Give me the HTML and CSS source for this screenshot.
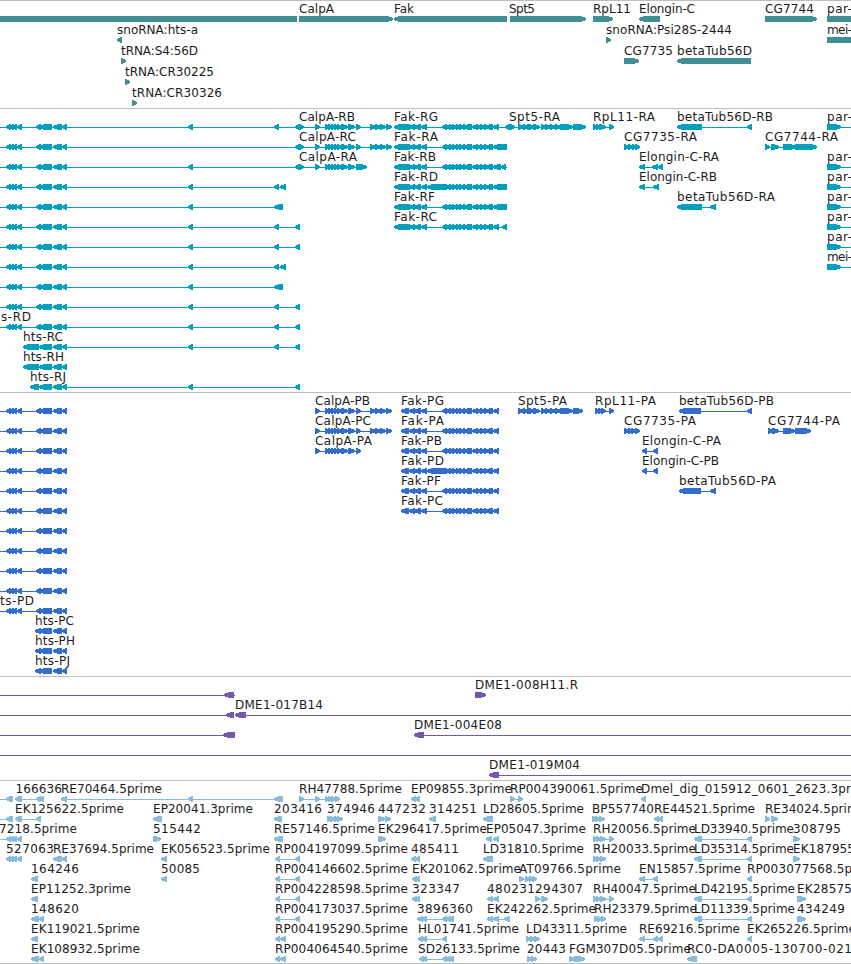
FILE: index.html
```html
<!DOCTYPE html>
<html lang="en">
<head>
    <meta charset="UTF-8">
    <meta name="viewport" content="width=device-width, initial-scale=1.0">
    <title>Genome Browser</title>
    <link rel="stylesheet" href="styles.css">
</head>
<body>
    <div class="browser">
        <div class="track genes" id="genes"></div>
        <div class="track transcripts" id="transcripts"></div>
        <div class="track proteins" id="proteins"></div>
        <div class="track clones" id="clones"></div>
        <div class="track ests" id="ests"></div>
    </div>

    <script src="tracks.js"></script>
</body>
</html>
```

FILE: styles.css
```css
body {
    margin: 0;
    background-color: #fff;
    overflow: hidden;
}

.browser {
    width: 851px;
    display: flex;
    flex-direction: column;
}

.track {
    box-sizing: border-box;
    border-top: 1px solid #bebebe;
    overflow: hidden;
}

.track svg {
    display: block;
}

.track text {
    font-family: "DejaVu Sans", sans-serif;
    font-size: 12px;
    fill: #1c1c1c;
}

.feature {
    fill: currentColor;
    shape-rendering: crispEdges;
}

.genes {
    height: 108px;
    color: #3e8e94;
}

.transcripts {
    height: 284px;
    color: #009fbf;
}

.proteins {
    height: 284px;
    color: #326ccc;
}

.clones {
    height: 104px;
    color: #7558a8;
}

.ests {
    height: 184px;
    color: #87bbdd;
    border-bottom: 1px solid #bebebe;
}
```

FILE: tracks.js
```javascript
// Features: "<a-b" exon on the minus strand, ">a-b" plus strand,
// "#a-b" plain block, "_a-b" intron line.
// Labels: [start, text, end]

const tail4 = ' <6-11 <10-14 <13-17 <17-22';
const htsEnd = ' <39-52 <53-62 <62-67';
const hts = tail4 + ' <36-41' + htsEnd;
const calp = ' >315-320 >325-330 >328-333 >331-336 >334-339 >337-342 >341-348 >348-355';
const calpEnd = ' >356-361 >370-376 >375-381 >380-386 >386-392';
const fakMid = ' <409-415 <414-421 <421-427 <442-447 <446-451 <449-454 <453-458 <456-461 <459-465 <463-472 <472-478 <477-482 <480-486 <485-493';
const spt = ' >518-524 >523-529 >527-535 >533-540 >541-547 >545-551 >550-556 >555-561 >560-571';
const par = ' _827-851 >827-841';
const rh = ' >593-598 >596-601 >600-606';
const ld = ' _694-752 <694-702 <747-752';
const rp = ' _275-300 <275-280 <295-300';

const genes = [
    { f: '#0-297 >299-393 <394-507 >510-586 >593-613 <639-660 >765-817 #827-851',
      l: [[299, 'CalpA', 334], [394, 'Fak', 414], [509, 'Spt5', 535], [593, 'RpL11', 631], [639, 'Elongin-C', 695], [765, 'CG7744', 814], [827, 'par-', 852]] },
    { f: '<117-122 >606-611 #827-851',
      l: [[117, 'snoRNA:hts-a', 198], [606, 'snoRNA:Psi28S-2444', 732], [827, 'mei-', 852]] },
    { f: '>121-126 >624-639 <677-751',
      l: [[121, 'tRNA:S4:56D', 198], [624, 'CG7735', 673], [677, 'betaTub56D', 752]] },
    { f: '>125-130', l: [[125, 'tRNA:CR30225', 214]] },
    { f: '>132-137', l: [[132, 'tRNA:CR30326', 222]] }
];

const transcripts = [
    { f: '_0-300' + hts + ' <188-193 <274-279 <295-300 _299-392 >299-304' + calp + calpEnd + ' _394-510 <394-410' + fakMid + ' <493-499 <505-510 _510-586 >510-515' + spt + ' >567-573 >573-586 _593-614 >593-598 >596-601 >599-606 >609-614 _677-752 <677-702 <747-752' + par,
      l: [[299, 'CalpA-RB', 355], [394, 'Fak-RG', 438], [509, 'Spt5-RA', 560], [593, 'RpL11-RA', 655], [677, 'betaTub56D-RB', 773], [827, 'par-', 852]] },
    { f: '_0-300' + hts + ' <295-300 _299-392 >299-304' + calp + calpEnd + ' _394-507 <394-410' + fakMid + ' <493-507 >624-629 >628-633 >632-637 >635-640 _765-817 >765-770 >771-779 >783-796 >795-817',
      l: [[299, 'CalpA-RC', 356], [394, 'Fak-RA', 438], [624, 'CG7735-RA', 697], [765, 'CG7744-RA', 838]] },
    { f: '_0-300' + hts + ' <188-193 <295-300 _299-367 >299-304' + calp + ' >356-367 _394-507 <394-410' + fakMid + ' <493-501 <501-506 _639-663 <639-645 <652-658 <658-663' + par,
      l: [[299, 'CalpA-RA', 357], [394, 'Fak-RB', 436], [639, 'Elongin-C-RA', 719], [827, 'par-', 852]] },
    { f: '_0-286' + hts + ' <188-193 <274-279 <280-286 _394-507 <394-410' + fakMid + ' <427-445 <493-507 _639-659 <639-645 <653-659' + par,
      l: [[394, 'Fak-RD', 438], [639, 'Elongin-C-RB', 717], [827, 'par-', 852]] },
    { f: '_0-283' + hts + ' <188-193 <274-283 _394-507 <394-410' + fakMid + ' <493-507 _677-716 <677-702 <710-716' + par,
      l: [[394, 'Fak-RF', 435], [677, 'betaTub56D-RA', 775], [827, 'par-', 852]] },
    { f: '_0-300' + hts + ' <188-193 <274-279 <295-300 _394-507 <394-410' + fakMid + ' <493-499 <502-507' + par,
      l: [[394, 'Fak-RC', 437], [827, 'par-', 852]] },
    { f: '_0-300' + hts + ' <188-193 <274-279 <295-300' + par, l: [[827, 'par-', 852]] },
    { f: '_0-286' + hts + ' <188-193 <274-279 <280-286' + par, l: [[827, 'mei-', 852]] },
    { f: '_0-283' + hts + ' <188-193 <274-283', l: [] },
    { f: '_0-300' + hts + ' <188-193 <274-279 <295-300', l: [] },
    { f: '_0-300' + hts + ' <188-193 <274-279 <295-300', l: [[1, 's-RD', 31]] },
    { f: '_23-300 <23-39' + htsEnd + ' <188-193 <274-279 <295-300', l: [[23, 'hts-RC', 63]] },
    { f: '_23-67 <23-39' + htsEnd, l: [[23, 'hts-RH', 64]] },
    { f: '_30-300 <30-39' + htsEnd + ' <188-193 <295-300', l: [[30, 'hts-RJ', 66]] }
];

const fakP = ' _401-499 <401-409' + fakMid + ' <493-499';
const proteins = [
    { f: '_0-67' + hts + ' _315-391' + calp + calpEnd + fakP + ' _518-583' + spt + ' >567-573 >573-583 _595-614 >595-600 >598-602 >601-606 >609-614 _679-752 <679-701 <747-752',
      l: [[315, 'CalpA-PB', 370], [401, 'Fak-PG', 444], [518, 'Spt5-PA', 567], [595, 'RpL11-PA', 656], [679, 'betaTub56D-PB', 774]] },
    { f: '_0-67' + hts + ' _315-391' + calp + calpEnd + fakP + ' >624-629 >628-632 >631-636 >635-640 _768-811 >768-773 >772-779 >783-795 >795-811',
      l: [[315, 'CalpA-PC', 371], [401, 'Fak-PA', 444], [624, 'CG7735-PA', 696], [768, 'CG7744-PA', 840]] },
    { f: '_0-67' + hts + ' _315-361' + calp + ' >356-361' + fakP + ' _642-658 <642-647 <653-658',
      l: [[315, 'CalpA-PA', 372], [401, 'Fak-PB', 442], [642, 'Elongin-C-PA', 721]] },
    { f: '_0-67' + hts + fakP + ' <427-445 _642-658 <642-647 <653-658',
      l: [[401, 'Fak-PD', 444], [642, 'Elongin-C-PB', 719]] },
    { f: '_0-67' + hts + fakP + ' _679-716 <679-701 <710-716',
      l: [[401, 'Fak-PF', 441], [679, 'betaTub56D-PA', 776]] },
    { f: '_0-67' + hts + fakP, l: [[401, 'Fak-PC', 443]] },
    { f: '_0-67' + hts, l: [] },
    { f: '_0-67' + hts, l: [] },
    { f: '_0-67' + hts, l: [] },
    { f: '_0-67' + hts, l: [] },
    { f: '_0-67' + hts, l: [[0, 'ts-PD', 34]] },
    { f: '<35-41' + htsEnd, l: [[35, 'hts-PC', 74]] },
    { f: '<35-41' + htsEnd, l: [[35, 'hts-PH', 75]] },
    { f: '<35-41' + htsEnd, l: [[35, 'hts-PJ', 70]] }
];

const clones = [
    { f: '_0-235 <224-234 >475-486', l: [[475, 'DME1-008H11.R', 578]] },
    { f: '_0-234 <226-234 _236-851 <235-246', l: [[235, 'DME1-017B14', 323]] },
    { f: '_0-235 <223-235 _414-851 <414-424', l: [[414, 'DME1-004E08', 502]] },
    { f: '_0-851', l: [] },
    { f: '_489-851 <489-499', l: [[489, 'DME1-019M04', 580]] }
];

const ests = [
    { f: '_0-13 <6-11 <8-13 _15-44 <15-20 <17-22 <36-41 <39-44 _61-283 <61-67 <188-193 <274-283 _299-340 >299-304 >315-320 >325-330 >328-333 >331-336 >335-340 <411-416 <414-420 _510-523 >510-515 >518-523 <641-646',
      l: [[15.5, '166636', 62], [61, 'RE70464.5prime', 162], [299, 'RH47788.5prime', 402], [411, 'EP09855.3prime', 512], [510, 'RP004390061.5prime', 643], [641, 'Dmel_dig_015912_0601_2623.3pr', 851]] },
    { f: '_0-13 <6-11 <8-13 _15-41 <15-20 <17-22 <36-41 <153-162 <274-282 >327-332 >330-335 >334-339 >337-343 >378-385 >385-391 <429-436 <483-493 >592-597 >595-600 >599-605 <654-659 <658-663 >765-770 >771-778',
      l: [[15, 'EK125622.5prime', 124], [153, 'EP20041.3prime', 253], [274, '203416', 322], [327, '374946', 375], [378, '447232', 426], [429, '314251', 477], [483, 'LD28605.5prime', 584], [592, 'BP557740', 654], [654, 'RE44521.5prime', 755], [765, 'RE34024.5prime', 866]] },
    { f: '_0-22' + tail4 + ' >153-161 <274-283 >378-386 <486-492 <493-499 _593-614' + rh + ' >609-614' + ld + ' >793-800',
      l: [[-1, '7218.5prime', 77], [153, '515442', 201], [274, 'RE57146.5prime', 375], [378, 'EK296417.5prime', 487], [486, 'EP05047.3prime', 586], [593, 'RH20056.5prime', 696], [694, 'LD33940.5prime', 794], [793, '308795', 841]] },
    { f: tail4 + ' <53-62 <62-67 <161-167' + rp + ' <411-416 <414-420 <483-493' + rh + ld + ' >793-800',
      l: [[6, '527063', 54], [53, 'RE37694.5prime', 154], [161, 'EK056523.5prime', 270], [275, 'RP004197099.5prime', 408], [411, '485411', 459], [483, 'LD31810.5prime', 584], [593, 'RH20033.5prime', 696], [694, 'LD35314.5prime', 794], [793, 'EK187955', 855]] },
    { f: '<31-38 <161-167' + rp + ' <412-417 <414-420 _519-537 >519-524 >525-530 >529-534 >532-537 _639-658 <639-645 <653-658 <747-752',
      l: [[31, '164246', 79], [161, '50085', 200], [275, 'RP004146602.5prime', 408], [412, 'EK201062.5prime', 521], [519, 'AT09766.5prime', 621], [639, 'EN15857.5prime', 741], [747, 'RP003077568.5prime', 880]] },
    { f: '<31-38' + rp + ' <412-417 <414-420 <487-493 <493-499 _535-548 >535-540 >541-548 _593-614' + rh + ' >609-614' + ld + ' >797-806',
      l: [[31, 'EP11252.3prime', 131], [275, 'RP004228598.5prime', 408], [412, '323347', 460], [487, '480231', 535], [535, '294307', 583], [593, 'RH40047.5prime', 696], [694, 'LD42195.5prime', 795], [797, 'EK28575', 852]] },
    { f: '<31-39 <39-44' + rp + ' _417-454 <417-423 <422-427 <442-447 <446-451 <449-454 _487-510 <487-493 <493-499 <504-510 >594-599 >597-602 >601-606' + ld + ' >797-806',
      l: [[31, '148620', 79], [275, 'RP004173037.5prime', 408], [417, '3896360', 473], [487, 'EK242262.5prime', 596], [594, 'RH23379.5prime', 697], [694, 'LD11339.5prime', 795], [797, '434249', 845]] },
    { f: '<31-38 <275-280 <280-286 _418-447 <418-423 <422-427 <442-447 >526-531 >530-535 >534-540 _639-663 <639-645 <653-658 <658-663 <747-752',
      l: [[31, 'EK119021.5prime', 140], [275, 'RP004195290.5prime', 408], [418, 'HL01741.5prime', 519], [526, 'LD43311.5prime', 627], [639, 'RE69216.5prime', 740], [747, 'EK265226.5prime', 856]] },
    { f: '<31-39 <39-44 <275-280 <280-286 _419-454 <419-424 <422-427 <442-447 <446-451 <449-454 >527-532 >531-537 >569-575 >574-585 <687-697',
      l: [[31, 'EK108932.5prime', 140], [275, 'RP004064540.5prime', 408], [418, 'SD26133.5prime', 520], [527, '20443', 566], [569, 'FGM307D05.5prime', 691], [687, 'RC0-DA0005-130700-021', 852]] }
];

function shape(kind, a, b, top) {
    const mid = top + 3;
    if (kind === '_') return `M${a} ${mid}H${b}v1H${a}z`;
    if (kind === '#') return `M${a} ${top}H${b}v6H${a}z`;
    const head = Math.min(5, b - a - 1);
    if (kind === '<') {
        return `M${a} ${mid - 1}L${a + head} ${top}H${b}v6H${a + head}L${a} ${mid + 1}z`;
    }
    return `M${b} ${mid - 1}L${b - head} ${top}H${a}v6H${b - head}L${b} ${mid + 1}z`;
}

function drawTrack(id, rows, pitch) {
    let features = '';
    let labels = '';
    rows.forEach((row, i) => {
        const top = 15 + i * pitch;
        for (const m of row.f.matchAll(/([<>#_])(\d+)-(\d+)/g)) {
            features += `<path class="feature" d="${shape(m[1], +m[2], +m[3], top)}"/>`;
        }
        row.l.forEach(([x, text, end]) => {
            labels += `<text x="${x}" y="${top - 3}" textLength="${end - x}">${text}</text>`;
        });
    });
    const height = rows.length * pitch + 3;
    document.getElementById(id).innerHTML =
        `<svg width="851" height="${height}">${features}${labels}</svg>`;
}

drawTrack('genes', genes, 21);
drawTrack('transcripts', transcripts, 20);
drawTrack('proteins', proteins, 20);
drawTrack('clones', clones, 20);
drawTrack('ests', ests, 20);
```
